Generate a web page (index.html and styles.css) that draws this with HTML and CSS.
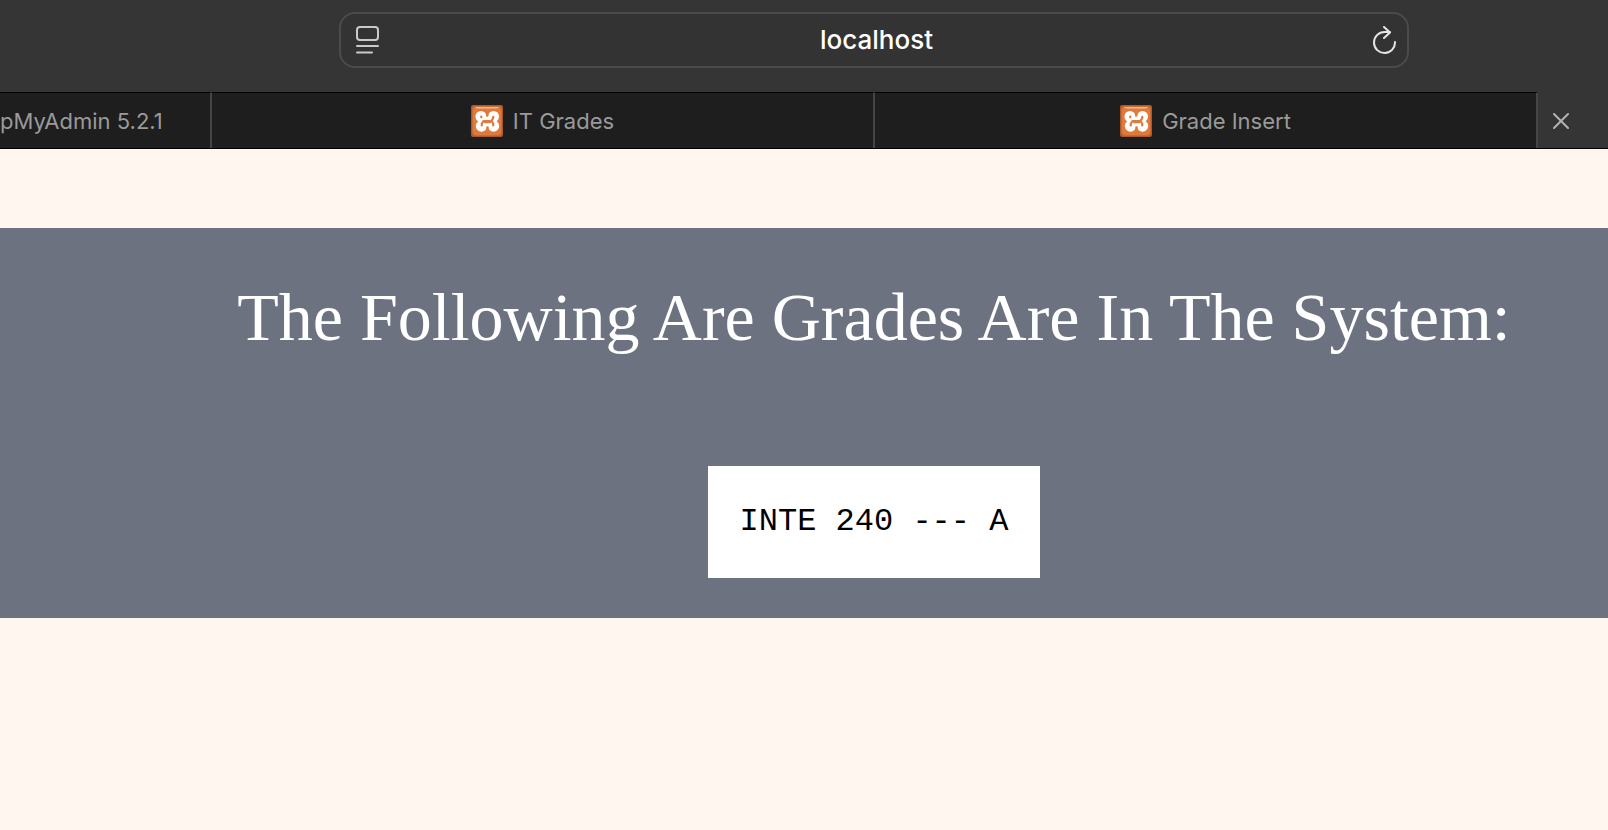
FILE: index.html
```html
<!DOCTYPE html>
<html lang="en">
<head>
<meta charset="utf-8">
<title>IT Grades</title>
<link rel="stylesheet" href="styles.css">
</head>
<body>
<svg class="defs" aria-hidden="true">
  <defs>
    <linearGradient id="shine" x1="0" y1="0" x2="0" y2="1">
      <stop offset="0" stop-color="#f6c9a4"/>
      <stop offset="1" stop-color="#e58b50"/>
    </linearGradient>
    <symbol id="xampp" viewBox="0 0 32 32">
      <rect width="32" height="32" rx="2" fill="#a9592c"/>
      <rect x="1" y="1" width="30" height="30" rx="3" fill="#cb6a33"/>
      <rect x="2" y="2" width="28" height="28" rx="4" fill="#e07a3c"/>
      <path d="M4 2H28Q27 4 24 4H8Q5 4 4 2Z" fill="url(#shine)"/>
      <g fill="#fff"><circle cx="10" cy="11.500" r="5.500"/><circle cx="22.500" cy="11.500" r="5.500"/><circle cx="10.500" cy="21" r="5.700"/><circle cx="22.500" cy="21" r="5.700"/><path d="M11 11H22V22H11Z"/></g>
      <path d="M16.200 7V10.500M16.500 22.500V26" stroke="#e07a3c" stroke-width="2.500" stroke-linecap="round"/>
      <path d="M10.300 11.500V12.300M22.200 11.800V13L20.500 16H12.500L10.800 18.500V20.500M20.500 16L22.200 18.500V20.500M14 17.200H19" fill="none" stroke="#e07a3c" stroke-width="2.200" stroke-linecap="round" stroke-linejoin="round"/>
    </symbol>
  </defs>
</svg>
<header class="browser">
  <div class="toolbar">
    <div class="address">
      <button class="icon-button" aria-label="Page menu">
        <svg width="24" height="28" viewBox="0 0 24 28" fill="none" stroke="#c9c9c9" stroke-width="2" stroke-linecap="round"><rect x="1" y="1" width="21" height="13" rx="3"/><path d="M1 20H22M1 26.500H16"/></svg>
      </button>
      <input class="url" type="text" value="localhost" aria-label="Address">
      <button class="icon-button" aria-label="Reload">
        <svg width="24" height="28" viewBox="0 0 24 28" fill="none" stroke="#e6e6e6" stroke-width="2" stroke-linecap="round" stroke-linejoin="round"><path d="M22 16A10.500 10.500 0 1 1 11.500 6H17M11 1L17 6.500L11 12"/></svg>
      </button>
    </div>
  </div>
  <nav class="tabs">
    <button class="tab tab-first">pMyAdmin 5.2.1</button>
    <button class="tab"><svg class="favicon" aria-hidden="true"><use href="#xampp"/></svg>IT Grades</button>
    <button class="tab"><svg class="favicon" aria-hidden="true"><use href="#xampp"/></svg>Grade Insert</button>
    <button class="close" aria-label="Close tab"><svg width="16" height="16" viewBox="0 0 16 16" stroke="#b2b2b2" stroke-width="2" stroke-linecap="round"><path d="M1 1L15 15M15 1L1 15"/></svg></button>
  </nav>
</header>
<main class="band">
  <h1 class="title">The Following Are Grades Are In The System:</h1>
  <p class="grade">INTE 240 --- A</p>
</main>
</body>
</html>
```
FILE: styles.css
```css
* { box-sizing: border-box; }
body { margin: 0; background: #fff6f0; font-family: Inter, "Liberation Sans", sans-serif; }
button { border: 0; background: none; padding: 0; font: inherit; color: inherit; }
.defs { position: absolute; width: 0; height: 0; }
.browser { background: #353535; border-bottom: 1px solid #000; }
.toolbar { padding: 12px 199px 24px 339px; }
.address { display: flex; align-items: center; height: 56px; padding: 0 10px 0 15px; border: 2px solid #4b4b4b; border-radius: 16px; background: #333; }
.icon-button { display: flex; }
.url { flex: 1; min-width: 0; border: 0; padding: 0; background: none; color: #fff; text-align: center; font: 500 26px/32px Inter, sans-serif; }
.tabs { display: grid; grid-template-columns: 212px 1fr 1fr 70px; height: 56px; }
.tab { display: flex; align-items: center; justify-content: center; gap: 10px; background: #1e1e1e; border-top: 1px solid #000; border-right: 2px solid #454545; color: #9a9a9a; font-size: 22px; white-space: nowrap; }
.tab-first { justify-content: flex-start; }
.favicon { width: 32px; height: 32px; }
.close { display: flex; align-items: center; padding: 2px 0 0 15px; }
.band { margin-top: 79px; padding: 50px 0 40px 140px; background: #6c7280; display: flex; flex-direction: column; align-items: center; gap: 110px; }
.title { margin: 0; color: #fff; font: 400 68px/78px "Liberation Serif", serif; white-space: nowrap; }
.grade { margin: 0; padding: 38px 32px; background: #fff; color: #000; font: 32px/36px "Liberation Mono", monospace; }
```
